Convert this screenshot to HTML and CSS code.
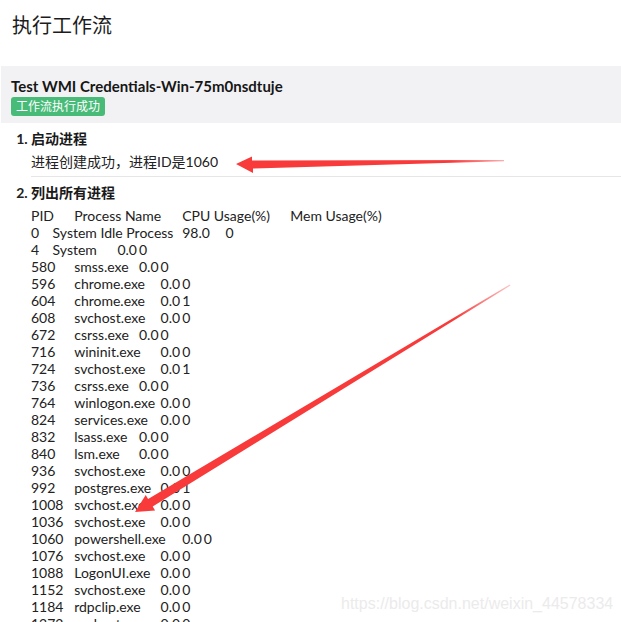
FILE: index.html
```html
<!DOCTYPE html>
<html lang="zh-CN">
<head>
<meta charset="utf-8">
<title>执行工作流</title>
<link rel="stylesheet" href="styles.css">
</head>
<body>
<div class="page">
  <h1 class="title">执行工作流</h1>
  <div class="panel">
    <div class="wf-name">Test WMI Credentials-Win-75m0nsdtuje</div>
    <span class="badge">工作流执行成功</span>
  </div>
  <ol class="steps">
    <li class="step step-first">
      <div class="step-title">启动进程</div>
      <div class="step-body">进程创建成功，进程ID是1060</div>
    </li>
    <li class="step">
      <div class="step-title">列出所有进程</div>
<pre class="proc">PID	Process Name	CPU Usage(%)	Mem Usage(%)
0	System Idle Process	98.0	0
4	System	0.0	0
580	smss.exe	0.0	0
596	chrome.exe	0.0	0
604	chrome.exe	0.0	1
608	svchost.exe	0.0	0
672	csrss.exe	0.0	0
716	wininit.exe	0.0	0
724	svchost.exe	0.0	1
736	csrss.exe	0.0	0
764	winlogon.exe	0.0	0
824	services.exe	0.0	0
832	lsass.exe	0.0	0
840	lsm.exe	0.0	0
936	svchost.exe	0.0	0
992	postgres.exe	0.0	1
1008	svchost.exe	0.0	0
1036	svchost.exe	0.0	0
1060	powershell.exe	0.0	0
1076	svchost.exe	0.0	0
1088	LogonUI.exe	0.0	0
1152	svchost.exe	0.0	0
1184	rdpclip.exe	0.0	0
1272	svchost.exe	0.0	0
1300	svchost.exe	0.0	0</pre>
    </li>
  </ol>

  <svg class="annot" width="621" height="622" viewBox="0 0 621 622" aria-hidden="true">
    <defs>
      <linearGradient id="g1" x1="236" y1="0" x2="505" y2="0" gradientUnits="userSpaceOnUse">
        <stop offset="0" stop-color="#f83a3a"/>
        <stop offset="0.8" stop-color="#f83a3a"/>
        <stop offset="1" stop-color="#fbb0b0"/>
      </linearGradient>
      <linearGradient id="g2" x1="135" y1="512" x2="511" y2="285" gradientUnits="userSpaceOnUse">
        <stop offset="0" stop-color="#f83a3a"/>
        <stop offset="0.85" stop-color="#f83a3a"/>
        <stop offset="1" stop-color="#fcc4c4"/>
      </linearGradient>
    </defs>
    <polygon fill="url(#g1)" points="236,164 252,156.5 252,160.5 504,160 504,161.2 253,168.5 253,173"/>
    <polygon fill="url(#g2)" points="135,512 155.1,510.4 152.7,506.5 510.4,285.4 509.8,284.6 148.1,498.9 145.7,495"/>
  </svg>
  <div class="watermark">https://blog.csdn.net/weixin_44578334</div>
</div>
</body>
</html>
```

FILE: styles.css
```css
html, body {
  margin: 0;
  padding: 0;
  background: #fff;
}

.page {
  position: relative;
  width: 621px;
  height: 622px;
  overflow: hidden;
  font-family: Lato, "Noto Sans CJK SC", sans-serif;
  color: #222;
}

.title {
  margin: 11px 0 0 12px;
  font-size: 20px;
  line-height: 28px;
  font-weight: normal;
  color: #1c1c1c;
}

.panel {
  margin: 27px 0 0 1px;
  padding: 11px 11px 7px 10px;
  background: #f2f2f4;
}

.wf-name {
  font-size: 15px;
  line-height: 18px;
  font-weight: bold;
  color: #161616;
}

.badge {
  display: inline-block;
  margin-top: 2px;
  padding: 0 5px;
  height: 19px;
  line-height: 19px;
  font-size: 12px;
  color: #fff;
  background: #48bb78;
  border-radius: 3px;
}

.steps {
  margin: 7px 0 0 0;
  padding: 0 0 0 31px;
  font-size: 14px;
}

.step::marker {
  font-weight: bold;
}

.step-first {
  padding-bottom: 6px;
  border-bottom: 1px solid #e6e6e6;
}

.step + .step {
  padding-top: 7px;
}

.step-title {
  font-weight: bold;
  line-height: 17px;
  margin-bottom: 6px;
  color: #1a1a1a;
}

.step-body {
  line-height: 17px;
  color: #222;
}

.proc {
  margin: 0;
  font-family: Lato, sans-serif;
  font-size: 14px;
  line-height: 17px;
  tab-size: 21.6px;
  color: #222;
  white-space: pre;
}

.annot {
  position: absolute;
  left: 0;
  top: 0;
  pointer-events: none;
}

.watermark {
  position: absolute;
  left: 341px;
  top: 595px;
  font-family: "Liberation Sans", Arial, sans-serif;
  font-size: 16px;
  line-height: 18px;
  color: #ebebeb;
  pointer-events: none;
}
```
